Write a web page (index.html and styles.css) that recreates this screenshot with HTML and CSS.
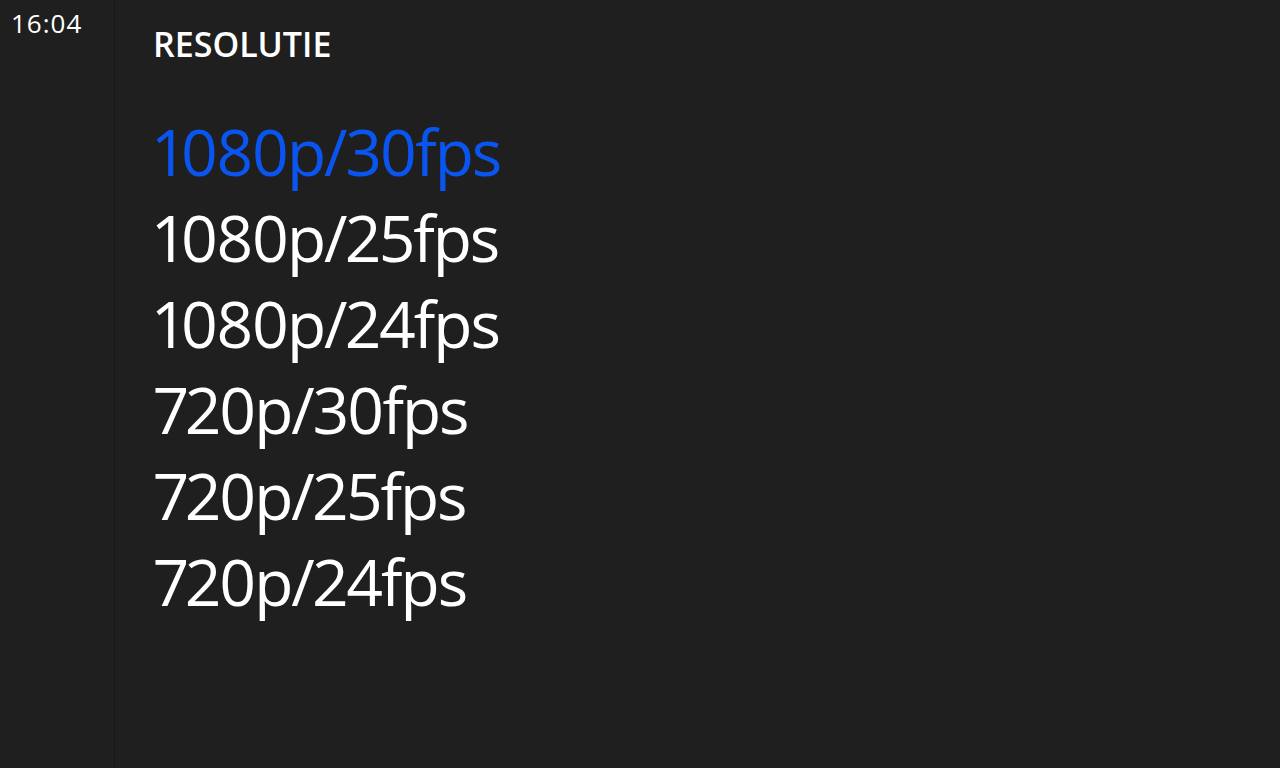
FILE: index.html
```html
<!DOCTYPE html>
<html lang="nl">
<head>
    <meta charset="UTF-8">
    <meta name="viewport" content="width=device-width, initial-scale=1.0">
    <title>Resolutie</title>
    <link rel="stylesheet" href="styles.css">
</head>
<body>
    <div class="screen">
        <!-- Status column with the clock -->
        <aside class="status">
            <span class="clock">16:04</span>
        </aside>

        <!-- Picker page -->
        <main class="picker">
            <h1 class="picker-title">RESOLUTIE</h1>
            <ul class="picker-list">
                <li class="picker-item selected">1080p/30fps</li>
                <li class="picker-item">1080p/25fps</li>
                <li class="picker-item">1080p/24fps</li>
                <li class="picker-item">720p/30fps</li>
                <li class="picker-item">720p/25fps</li>
                <li class="picker-item">720p/24fps</li>
            </ul>
        </main>
    </div>
</body>
</html>
```

FILE: styles.css
```css
html, body {
    margin: 0;
    padding: 0;
    height: 100%;
}
body {
    background-color: #1f1f1f;
    color: #ffffff;
    font-family: "Open Sans", "Noto Sans", sans-serif;
    overflow: hidden;
}
.screen {
    display: flex;
    height: 100%;
}
.status {
    width: 115px;
    flex-shrink: 0;
    border-right: 1px solid #171717;
    padding: 8px 0 0 11px;
    box-sizing: border-box;
}
.clock {
    display: block;
    font-size: 26px;
    line-height: 30px;
    letter-spacing: 1px;
}
.picker {
    flex: 1;
    padding: 24px 0 0 38px;
}
.picker-title {
    margin: 0;
    font-size: 34px;
    line-height: 40px;
    font-weight: 600;
}
.picker-list {
    list-style: none;
    margin: 45px 0 0;
    padding: 0 0 0 2px;
}
.picker-item {
    font-size: 64px;
    line-height: 86px;
    letter-spacing: -2px;
    font-variant-numeric: proportional-nums;
    white-space: nowrap;
}
.picker-item.selected {
    color: #0a55f0;
}
```
